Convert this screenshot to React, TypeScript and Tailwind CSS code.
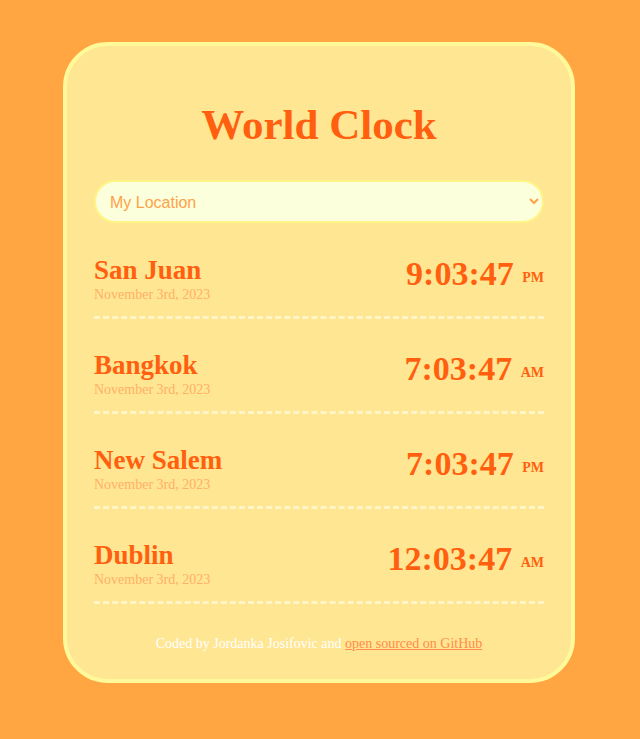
import { useState } from "react";

type City = { name: string; date: string; time: string; period: "AM" | "PM" };

const cities: City[] = [
  { name: "San Juan", date: "November 3rd, 2023", time: "9:03:47", period: "PM" },
  { name: "Bangkok", date: "November 3rd, 2023", time: "7:03:47", period: "AM" },
  { name: "New Salem", date: "November 3rd, 2023", time: "7:03:47", period: "PM" },
  { name: "Dublin", date: "November 3rd, 2023", time: "12:03:47", period: "AM" },
];

function CityRow({ city }: { city: City }) {
  return (
    <li className="flex items-start justify-between border-b-[3px] border-dashed border-[#fff5c7] pt-[31px] pb-[13px]">
      <div>
        <h2 className="text-[27px] leading-[31px] font-bold text-[#ff5f0f]">{city.name}</h2>
        <div className="text-[14px] leading-[17px] text-[#ffb066]">{city.date}</div>
      </div>
      <div className="text-[34px] leading-[38px] font-bold text-[#ff5f0f]">
        {city.time} <small className="align-middle text-[14px] leading-[17px]">{city.period}</small>
      </div>
    </li>
  );
}

export default function App() {
  const [place, setPlace] = useState("current");

  return (
    <div className="min-h-screen bg-[#ffa542] pt-[42px] pr-0.5 pb-14 font-['Liberation_Serif','Times_New_Roman',serif]">
      <main className="mx-auto max-w-lg rounded-[45px] border-4 border-[#fff999] bg-[#ffe692] p-[27px]">
        <h1 className="mt-[29px] mb-[33px] text-center text-[43px] leading-[45px] font-bold text-[#ff5f0f]">
          World Clock
        </h1>
        <select
          aria-label="Choose a location"
          value={place}
          onChange={(event) => setPlace(event.target.value)}
          className="block h-[43px] w-full rounded-[22px] border-2 border-[#fff586] bg-[#fbffdc] px-[10px] pt-0.5 font-['Liberation_Sans',Arial,sans-serif] text-base text-[#ffa14a]"
        >
          <option value="current">My Location</option>
          {cities.map((city) => (
            <option key={city.name} value={city.name}>
              {city.name}
            </option>
          ))}
        </select>
        <ul className="mt-px">
          {cities.map((city) => (
            <CityRow key={city.name} city={city} />
          ))}
        </ul>
        <footer className="mt-[31px] text-center text-[14px] leading-[17px] text-white">
          Coded by Jordanka Josifovic and{" "}
          <a href="#github" className="text-[#ff8c4a] underline">
            open sourced on GitHub
          </a>
        </footer>
      </main>
    </div>
  );
}
